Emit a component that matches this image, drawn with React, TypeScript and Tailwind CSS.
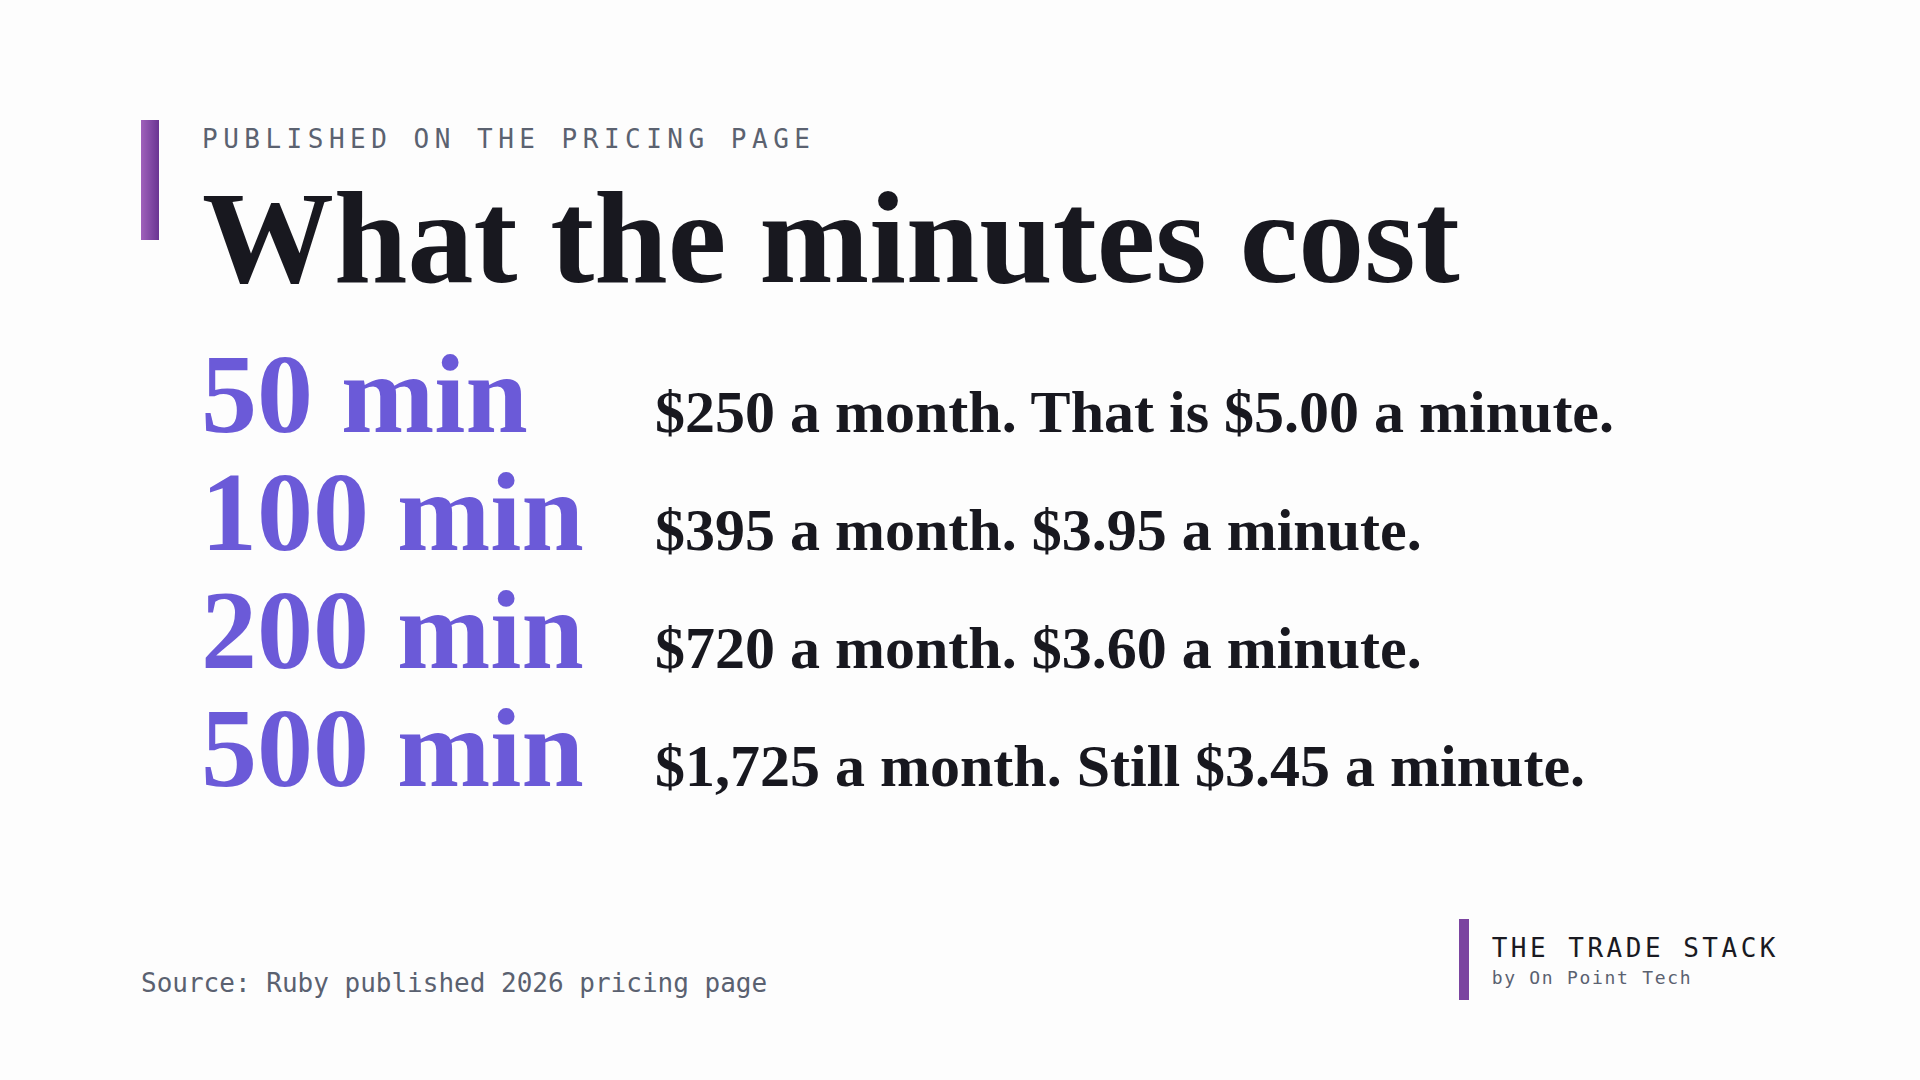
const rows = [
  { amount: "50 min", note: "$250 a month. That is $5.00 a minute." },
  { amount: "100 min", note: "$395 a month. $3.95 a minute." },
  { amount: "200 min", note: "$720 a month. $3.60 a minute." },
  { amount: "500 min", note: "$1,725 a month. Still $3.45 a minute." },
];

const serif = "font-['Liberation_Serif',serif]";
const mono = "font-['DejaVu_Sans_Mono',monospace]";

export default function App() {
  return (
    <div className="w-[1920px] h-[1080px] bg-[#fdfdfd] flex flex-col px-[141px] pt-[120px] pb-[80px] overflow-hidden">
      {/* header */}
      <div className="flex">
        <div className="w-[18px] h-[120px] shrink-0 bg-linear-to-r from-[#a062bb] to-[#6a3592]" />
        <div className="ml-[43px] pt-[6px]">
          <div className={`${mono} text-[26px] leading-none tracking-[5.5px] text-[#5b6270]`}>
            PUBLISHED ON THE PRICING PAGE
          </div>
          <h1 className={`${serif} mt-[20px] text-[132px] leading-none font-bold text-[#18181f]`}>
            What the minutes cost
          </h1>
        </div>
      </div>

      {/* price rows */}
      <div className="mt-[31px] ml-[60px] flex flex-col">
        {rows.map((row) => (
          <div key={row.amount} className="flex items-baseline">
            <div className={`${serif} w-[454px] shrink-0 text-[112px] leading-[118px] font-bold text-[#6b5ad8]`}>
              {row.amount}
            </div>
            <div className={`${serif} text-[60px] leading-none font-bold text-[#18181f]`}>{row.note}</div>
          </div>
        ))}
      </div>

      {/* footer */}
      <div className="mt-auto flex items-end justify-between">
        <div className={`${mono} pb-[4px] text-[26px] leading-none text-[#5a6170]`}>
          Source: Ruby published 2026 pricing page
        </div>
        <div className="flex h-[81px]">
          <div className="w-[10px] bg-[#7b44a0]" />
          <div className="ml-[23px] pt-[16px] flex flex-col">
            <div className={`${mono} text-[26px] leading-none tracking-[3.5px] text-[#1a1a22]`}>
              THE TRADE STACK
            </div>
            <div className={`${mono} mt-[8px] text-[18px] leading-none tracking-[1.7px] text-[#5a6170]`}>
              by On Point Tech
            </div>
          </div>
        </div>
      </div>
    </div>
  );
}
